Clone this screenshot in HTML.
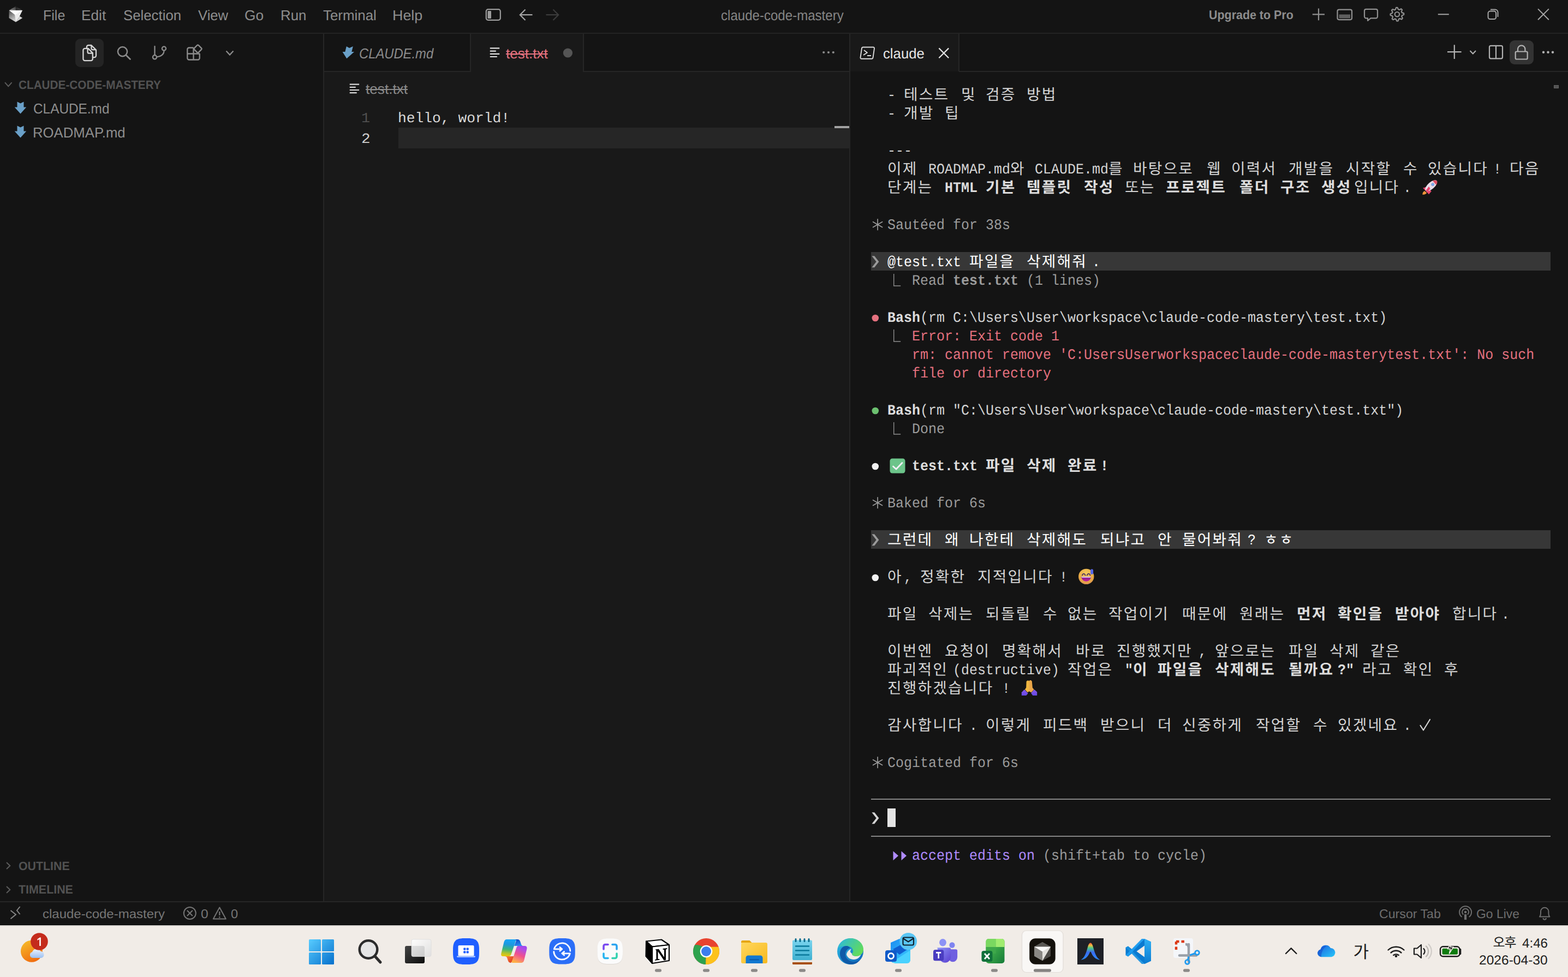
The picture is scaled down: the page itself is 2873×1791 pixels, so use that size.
<!DOCTYPE html>
<html lang="ko"><head><meta charset="utf-8"><title>claude-code-mastery - Cursor</title>
<style>
html,body{margin:0;padding:0;background:#141414}
body{width:2873px;height:1791px;overflow:hidden;position:relative;font-family:"Liberation Sans",sans-serif;text-rendering:geometricPrecision;-webkit-font-smoothing:antialiased}
.bx{position:absolute}
.t{position:absolute;white-space:pre;transform-origin:0 0}
#ov{position:absolute;left:0;top:0}
#term,#term2{position:absolute;left:1596px;top:156px;width:1245px;height:1496px;font-family:"Liberation Mono",monospace;font-size:25px}
.row{position:absolute;left:0;width:1245px;height:34px;line-height:40px;white-space:pre}
.c{position:absolute;top:0;white-space:pre;transform:scaleY(1.07);transform-origin:0 26.6px}
.bd{font-weight:bold}
.hk{position:absolute;top:0;height:34px;line-height:34px;overflow:hidden;color:transparent;opacity:0;font-size:12px;white-space:nowrap}
.hl{position:absolute;left:0;width:1245px;height:34px;background:#373737}
#tb{position:absolute;left:0;top:1695px;width:2873px;height:96px;background:#f1ece7;border-top:1px solid #050505;box-sizing:border-box;box-shadow:inset 0 1px 0 #c4c1be,inset 0 2px 0 #dfdbd7}
.kt{font-family:"Liberation Mono","Noto Sans CJK KR",monospace;font-size:27.8px;letter-spacing:2.2px;fill:#d4d4d4;white-space:pre}
.kb{font-weight:bold;fill:#dddddd}
.kw{fill:#ffffff}
</style></head><body>
<div class="bx" style="left:594px;top:131px;width:962px;height:1521px;background:#191919"></div>
<div class="bx" style="left:863px;top:62px;width:205px;height:70px;background:#191919"></div>
<div class="bx" style="left:1558px;top:62px;width:198px;height:69px;background:#191919"></div>
<div class="bx" style="left:0;top:60px;width:2873px;height:2px;background:#232323"></div>
<div class="bx" style="left:592px;top:62px;width:2px;height:1591px;background:#262626"></div>
<div class="bx" style="left:1556px;top:62px;width:2px;height:1591px;background:#262626"></div>
<div class="bx" style="left:594px;top:130px;width:269px;height:2px;background:#262626"></div>
<div class="bx" style="left:1068px;top:130px;width:488px;height:2px;background:#262626"></div>
<div class="bx" style="left:1757px;top:130px;width:1116px;height:2px;background:#262626"></div>
<div class="bx" style="left:861px;top:62px;width:2px;height:69px;background:#262626"></div>
<div class="bx" style="left:1068px;top:62px;width:2px;height:69px;background:#262626"></div>
<div class="bx" style="left:1756px;top:62px;width:2px;height:69px;background:#262626"></div>
<div class="bx" style="left:138px;top:71px;width:52px;height:52px;border-radius:9px;background:#242424"></div>
<div class="bx" style="left:2766px;top:74px;width:44px;height:44px;border-radius:9px;background:#333"></div>
<div class="bx" style="left:730px;top:234px;width:826px;height:38px;background:#262626"></div>
<div class="bx" style="left:1529px;top:231px;width:27px;height:4px;background:#a2a2a2"></div>
<div class="bx" style="left:2847px;top:156px;width:9px;height:6px;background:#525252;box-shadow:inset 0 0 0 1px #646464"></div>
<div class="bx" style="left:0;top:1652px;width:2873px;height:2px;background:#262626"></div>
<div id="tb"></div>
<div id="term"><div class="hl" style="top:306px"></div><div class="hl" style="top:816px"></div></div>
<svg id="ov" width="2873" height="1791" viewBox="0 0 2873 1791">
<defs><linearGradient id="gwin" gradientUnits="userSpaceOnUse" x1="566" y1="1722" x2="612" y2="1768"><stop offset="0" stop-color="#58ccff"/><stop offset="1" stop-color="#0670cc"/></linearGradient><linearGradient id="gsun" x1="0.2" y1="0" x2="0.7" y2="1"><stop offset="0" stop-color="#f6bb2a"/><stop offset="1" stop-color="#f0690e"/></linearGradient><linearGradient id="gcloud" x1="0" y1="0" x2="0" y2="1"><stop offset="0" stop-color="#eef4ff"/><stop offset="1" stop-color="#9cc0f0"/></linearGradient><linearGradient id="gtv" x1="0" y1="0" x2="1" y2="1"><stop offset="0" stop-color="#444"/><stop offset="1" stop-color="#0c0c0c"/></linearGradient><linearGradient id="gtv2" x1="0" y1="0" x2="1" y2="1"><stop offset="0" stop-color="#ffffff"/><stop offset="1" stop-color="#dedede"/></linearGradient><linearGradient id="gcp1" x1="0.1" y1="0" x2="0" y2="1"><stop offset="0" stop-color="#18a4f4"/><stop offset="0.25" stop-color="#1c98e0"/><stop offset="0.55" stop-color="#3cb47a"/><stop offset="0.8" stop-color="#b8c42a"/><stop offset="1" stop-color="#f6c806"/></linearGradient><linearGradient id="gcpf1" x1="0" y1="0" x2="0.4" y2="1"><stop offset="0" stop-color="#0a44c4"/><stop offset="1" stop-color="#2a8cf0"/></linearGradient><linearGradient id="gcpf2" x1="0" y1="0" x2="1" y2="0.6"><stop offset="0" stop-color="#ff8a40"/><stop offset="1" stop-color="#dc3a1e"/></linearGradient><linearGradient id="gcp2" x1="0.75" y1="0" x2="0.35" y2="1"><stop offset="0" stop-color="#a048f0"/><stop offset="0.2" stop-color="#b44ee0"/><stop offset="0.55" stop-color="#f0508e"/><stop offset="0.8" stop-color="#f88470"/><stop offset="1" stop-color="#ffb044"/></linearGradient><linearGradient id="gedge" x1="0" y1="0" x2="1" y2="1"><stop offset="0" stop-color="#2fc0e8"/><stop offset="1" stop-color="#0c5fb5"/></linearGradient><linearGradient id="gedge2" x1="0" y1="0" x2="1" y2="0.6"><stop offset="0" stop-color="#2ab8e0"/><stop offset="1" stop-color="#62dc5a"/></linearGradient><linearGradient id="gfold" x1="0" y1="0" x2="1" y2="1"><stop offset="0" stop-color="#ffd75e"/><stop offset="1" stop-color="#f7b91e"/></linearGradient><linearGradient id="gnote" x1="0" y1="0" x2="0" y2="1"><stop offset="0" stop-color="#7ad4ee"/><stop offset="1" stop-color="#3fb0d0"/></linearGradient><linearGradient id="gout" x1="0" y1="0" x2="1" y2="1"><stop offset="0" stop-color="#1a8af0"/><stop offset="1" stop-color="#3fd0ff"/></linearGradient><linearGradient id="gteam" x1="0" y1="0" x2="1" y2="1"><stop offset="0" stop-color="#8f96f8"/><stop offset="1" stop-color="#5a3fd0"/></linearGradient><linearGradient id="gxl" x1="0" y1="0" x2="1" y2="1"><stop offset="0" stop-color="#5ccc55"/><stop offset="1" stop-color="#147a38"/></linearGradient><linearGradient id="gA" x1="0" y1="1" x2="0" y2="0"><stop offset="0" stop-color="#2a8cff"/><stop offset="0.45" stop-color="#3a6cf0"/><stop offset="0.7" stop-color="#4fc88a"/><stop offset="0.85" stop-color="#f0c040"/><stop offset="1" stop-color="#ff5a3c"/></linearGradient><linearGradient id="gvs" x1="0" y1="0" x2="0" y2="1"><stop offset="0" stop-color="#2eb0f5"/><stop offset="1" stop-color="#0a7ad0"/></linearGradient><linearGradient id="god" x1="0" y1="0" x2="1" y2="1"><stop offset="0" stop-color="#1a5fe0"/><stop offset="1" stop-color="#28c8f8"/></linearGradient><linearGradient id="gcube" x1="0" y1="0" x2="1" y2="0"><stop offset="0" stop-color="#7a7a7a"/><stop offset="1" stop-color="#dcdcdc"/></linearGradient><linearGradient id="glogoA" x1="0" y1="1" x2="1" y2="0"><stop offset="0" stop-color="#9a9a9a"/><stop offset="1" stop-color="#2c2c2c"/></linearGradient><linearGradient id="glogoB" x1="0" y1="0" x2="1" y2="1"><stop offset="0" stop-color="#161616"/><stop offset="1" stop-color="#4a4a4a"/></linearGradient><linearGradient id="glogoC" x1="0" y1="0" x2="0.300" y2="1"><stop offset="0" stop-color="#484848"/><stop offset="1" stop-color="#cfcfcf"/></linearGradient><radialGradient id="gface" cx="0.5" cy="0.3" r="0.75"><stop offset="0" stop-color="#f4cc5c"/><stop offset="0.7" stop-color="#e8a844"/><stop offset="1" stop-color="#d88c58"/></radialGradient><linearGradient id="gmouth" x1="0" y1="0" x2="0" y2="1"><stop offset="0" stop-color="#7a1e8c"/><stop offset="1" stop-color="#c8209a"/></linearGradient><linearGradient id="gsleeve" x1="0.5" y1="0" x2="0.5" y2="1"><stop offset="0" stop-color="#8a58ec"/><stop offset="1" stop-color="#6448e0"/></linearGradient></defs>
<path d="M28.900 11.500L16.500 19H28.900z" fill="url(#glogoA)"/><path d="M28.900 11.500L41.200 19H28.900z" fill="url(#glogoB)"/><path d="M16.500 19L27.200 27.200L28.900 40.400L16.500 33z" fill="url(#glogoC)"/><path d="M16.700 19H41.200L36 29.700L28.900 40.400L27.200 27.200z" fill="#fdfdfd"/><path d="M27.200 27.200L41.200 19L28.900 40.400z" fill="#ececec"/><path d="M41.200 19V33L36 29.700z" fill="#1b1b1b"/><path d="M36 29.700L41.200 33L28.900 40.400z" fill="#d4d4d4"/>
<rect x="890.800" y="17.200" width="26" height="19.600" rx="3.500" fill="none" stroke="#9c9c9c" stroke-width="2.200"/>
<rect x="893.500" y="20" width="6.500" height="14" rx="1" fill="#9c9c9c"/>
<path d="M975.500 27.200H953M962.500 17.500L952.800 27.200L962.500 37" fill="none" stroke="#a4a4a4" stroke-width="2.200"/>
<path d="M1000.500 27.200H1023M1013.500 17.500L1023.200 27.200L1013.500 37" fill="none" stroke="#3c3c3c" stroke-width="2.200"/>
<path d="M2404.800 26.400H2427M2416 15.500V37.300" stroke="#909090" stroke-width="2.200"/>
<rect x="2450.500" y="17.600" width="26.500" height="18.500" rx="3" fill="none" stroke="#909090" stroke-width="2.200"/>
<rect x="2453.500" y="26.500" width="20.500" height="7" fill="#5e5e5e"/>
<path d="M2503 16.800h18a3 3 0 0 1 3 3v10.500a3 3 0 0 1-3 3h-9.500l-5.500 4.500v-4.500h-3a3 3 0 0 1-3-3V19.800a3 3 0 0 1 3-3z" fill="none" stroke="#909090" stroke-width="2.200" stroke-linejoin="round"/>
<path d="M2558.1 13.9L2560.5 13.8L2562.1 17.3L2563.8 17.9L2567.3 16.2L2569.1 17.9L2567.8 21.5L2568.6 23.1L2572.2 24.4L2572.3 26.8L2568.8 28.4L2568.2 30.1L2569.9 33.6L2568.2 35.4L2564.6 34.1L2563.0 34.9L2561.7 38.5L2559.3 38.6L2557.7 35.1L2556.0 34.5L2552.5 36.2L2550.7 34.5L2552.0 30.9L2551.2 29.3L2547.6 28.0L2547.5 25.6L2551.0 24.0L2551.6 22.3L2549.9 18.8L2551.6 17.0L2555.2 18.3L2556.8 17.5z" fill="none" stroke="#909090" stroke-width="2.200" stroke-linejoin="round"/>
<circle cx="2559.9" cy="26.2" r="4.200" fill="none" stroke="#909090" stroke-width="2.200"/>
<path d="M2634.800 26.300H2654.800" stroke="#a6a6a6" stroke-width="2"/>
<rect x="2726.600" y="20.600" width="14.500" height="14.500" rx="3.500" fill="none" stroke="#a6a6a6" stroke-width="2"/>
<path d="M2731 17.400h8.500a5 5 0 0 1 5 5v8.500" fill="none" stroke="#a6a6a6" stroke-width="2"/>
<path d="M2818 16.400L2837.800 36.200M2837.800 16.400L2818 36.200" stroke="#a6a6a6" stroke-width="2"/>
<path d="M158.900 88v-2a3 3 0 0 1 3-3h5.500l8.600 8.600v10.500a3 3 0 0 1-3 3h-2.800M167.400 83.200v5.400a2.500 2.500 0 0 0 2.500 2.500h5.900" fill="none" stroke="#d6d6d6" stroke-width="2.300" stroke-linejoin="round"/>
<path d="M155.400 88.900h6.200l8.200 8.200v11a3 3 0 0 1-3 3h-11.400a3 3 0 0 1-3-3v-16.200a3 3 0 0 1 3-3zM160.600 89v6.200a2.500 2.500 0 0 0 2.500 2.500h6.500" fill="none" stroke="#d6d6d6" stroke-width="2.300" stroke-linejoin="round"/>
<circle cx="224.500" cy="94.600" r="8.600" fill="none" stroke="#8c8c8c" stroke-width="2.500"/>
<path d="M230.800 101L238.500 108.500" stroke="#8c8c8c" stroke-width="2.700" stroke-linecap="round"/>
<circle cx="283.500" cy="104.800" r="3.600" fill="none" stroke="#8c8c8c" stroke-width="2.300"/>
<circle cx="300.500" cy="89" r="3.600" fill="none" stroke="#8c8c8c" stroke-width="2.300"/>
<path d="M283.500 85V101M300.500 92.800c0 7-5.500 10.500-13.300 11.600" fill="none" stroke="#8c8c8c" stroke-width="2.300" stroke-linecap="round"/>
<path d="M354.500 87.500V109.500M343.300 98.500H365.700M346.300 87.500h8.200M343.300 90.500a3 3 0 0 1 3-3M343.300 90.500v16a3 3 0 0 0 3 3h16.400a3 3 0 0 0 3-3v-8.500" fill="none" stroke="#8c8c8c" stroke-width="2.300" stroke-linejoin="round"/>
<rect x="357" y="84" width="11" height="11" rx="2" fill="none" stroke="#8c8c8c" stroke-width="2.300" transform="rotate(45 362.500 89.500)"/>
<path d="M414.500 93.500L421 100.500L427.500 93.500" fill="none" stroke="#8c8c8c" stroke-width="2.300"/>
<path d="M9 151.200L15.300 158.200L21.600 151.200" fill="none" stroke="#5c5c5c" stroke-width="2"/>
<path d="M4.8 0.0L10.8 3.0L16.8 0.0L16.8 10.0L21.5 10.0L10.8 22.2L0.0 10.0L4.8 10.0z" fill="#6aa0c8" transform="translate(26.7 186.4)"/>
<path d="M4.8 0.0L10.8 3.0L16.8 0.0L16.8 10.0L21.5 10.0L10.8 22.2L0.0 10.0L4.8 10.0z" fill="#6aa0c8" transform="translate(26.7 230.4)"/>
<path d="M12 1581L18.300 1587L12 1593" fill="none" stroke="#5c5c5c" stroke-width="2"/>
<path d="M12 1625L18.300 1631L12 1637" fill="none" stroke="#5c5c5c" stroke-width="2"/>
<path d="M4.8 0.0L10.8 3.0L16.8 0.0L16.8 10.0L21.5 10.0L10.8 22.2L0.0 10.0L4.8 10.0z" fill="#6aa0c8" transform="translate(630 85) skewX(-14)"/>
<path d="M897.8 88.4h17.400M897.8 93.6h11M897.8 98.8h17.400M897.8 104h13" stroke="#e0e0e0" stroke-width="2.200" fill="none"/>
<circle cx="1040.400" cy="97" r="8.600" fill="#555"/>
<path d="M640.7 154.6h17.400M640.7 159.8h11M640.7 165h17.400M640.7 170.2h13" stroke="#d8d8d8" stroke-width="2.200" fill="none"/>
<circle cx="1509.2" cy="96" r="2.100" fill="#8c8c8c"/>
<circle cx="1518" cy="96" r="2.100" fill="#8c8c8c"/>
<circle cx="1526.8" cy="96" r="2.100" fill="#8c8c8c"/>
<g transform="translate(1576.500 85.500)" fill="none" stroke="#dcdcdc" stroke-width="1.900" stroke-linejoin="round"><path d="M5 1h18.500a2 2 0 0 1 2 2.300l-2.500 17a2.500 2.500 0 0 1-2.500 2H2a2 2 0 0 1-2-2.300l2.500-17A2.500 2.500 0 0 1 5 1z"/><path d="M6.500 6.500L12.500 11L5.500 15.500M12.500 16.500h7"/></g>
<path d="M1720.400 88.400L1738.200 106.200M1738.200 88.400L1720.400 106.200" stroke="#e2e2e2" stroke-width="2.200"/>
<path d="M2652 95.200H2677.600M2664.800 82.300V108" stroke="#b2b2b2" stroke-width="2.200"/>
<path d="M2693.500 93L2698.800 98.500L2704 93" fill="none" stroke="#b2b2b2" stroke-width="2"/>
<rect x="2729" y="83.800" width="24" height="23.500" rx="2.500" fill="none" stroke="#b2b2b2" stroke-width="2.200"/>
<path d="M2741 83.800V107.300" stroke="#b2b2b2" stroke-width="2.200"/>
<rect x="2776.700" y="94.500" width="22" height="14" rx="2" fill="none" stroke="#b2b2b2" stroke-width="2.200"/>
<path d="M2781 94.500v-4.500a6.700 6.700 0 0 1 13.400 0v4.500" fill="none" stroke="#b2b2b2" stroke-width="2.200"/>
<circle cx="2828" cy="95.700" r="2.200" fill="#b2b2b2"/>
<circle cx="2836.500" cy="95.700" r="2.200" fill="#b2b2b2"/>
<circle cx="2845" cy="95.700" r="2.200" fill="#b2b2b2"/>
<path d="M19.500 1669L29 1676.500L19.500 1684.300M36.600 1662L31 1669L36.600 1676" fill="none" stroke="#868686" stroke-width="2"/>
<circle cx="347.800" cy="1674" r="11" fill="none" stroke="#747474" stroke-width="2"/>
<path d="M342.800 1669L352.800 1679M352.800 1669L342.800 1679" stroke="#747474" stroke-width="2"/>
<path d="M402.300 1663.500L413.800 1684.500H390.800z" fill="none" stroke="#747474" stroke-width="2" stroke-linejoin="round"/>
<path d="M402.300 1671V1678M402.300 1680.200V1682.400" stroke="#747474" stroke-width="2.200"/>
<path d="M2678.500 1681a11 11 0 1 1 13.200 0" fill="none" stroke="#6e6e6e" stroke-width="2"/>
<path d="M2681.300 1676.500a6 6 0 1 1 7.600 0" fill="none" stroke="#6e6e6e" stroke-width="2"/>
<circle cx="2685.100" cy="1672" r="2.300" fill="#6e6e6e"/>
<path d="M2683 1676h4.200v10h-4.200z" fill="#6e6e6e"/>
<path d="M2821 1680.500c2.500-2.500 2-6 2-9.500a7.200 7.200 0 0 1 14.400 0c0 3.500-0.500 7 2 9.500z" fill="none" stroke="#6e6e6e" stroke-width="2" stroke-linejoin="round"/>
<path d="M2827.500 1683a2.700 2.700 0 0 0 5.400 0" fill="none" stroke="#6e6e6e" stroke-width="2"/>
<circle cx="58" cy="1743.800" r="20" fill="url(#gsun)"/>
<path d="M60 1756a5.500 5.500 0 0 1-1-10.800a8.500 8.500 0 0 1 15.500-1.500a6.300 6.300 0 0 1 1.500 12.300z" fill="url(#gcloud)"/>
<circle cx="72" cy="1726" r="15.800" fill="#c42b1c"/>
<path d="M68.500 1721.500l4.500-3h1.800v15.500h-2.600v-12.300l-3.700 2.200z" fill="#fff"/>
<rect x="566" y="1722" width="22" height="22" rx="1.500" fill="url(#gwin)"/>
<rect x="590" y="1722" width="22" height="22" rx="1.500" fill="url(#gwin)"/>
<rect x="566" y="1746" width="22" height="22" rx="1.500" fill="url(#gwin)"/>
<rect x="590" y="1746" width="22" height="22" rx="1.500" fill="url(#gwin)"/>
<circle cx="675" cy="1740.500" r="16.300" fill="#e6e6e6" stroke="#2c2c2c" stroke-width="4.500"/>
<path d="M687 1753L697 1764" stroke="#2c2c2c" stroke-width="5" stroke-linecap="round"/>
<rect x="742" y="1734" width="36" height="32" rx="3" fill="url(#gtv)"/>
<rect x="754" y="1722" width="36" height="31.500" rx="3" fill="url(#gtv2)" fill-opacity="0.880" stroke="#dcdcdc" stroke-width="0.800"/>
<path d="M878.0 1744.0L877.9 1750.4L877.6 1753.7L877.2 1756.3L876.5 1758.5L875.7 1760.4L874.7 1762.0L873.5 1763.5L872.0 1764.7L870.4 1765.7L868.5 1766.5L866.3 1767.2L863.7 1767.6L860.4 1767.9L854.0 1768.0L847.6 1767.9L844.3 1767.6L841.7 1767.2L839.5 1766.5L837.6 1765.7L836.0 1764.7L834.5 1763.5L833.3 1762.0L832.3 1760.4L831.5 1758.5L830.8 1756.3L830.4 1753.7L830.1 1750.4L830.0 1744.0L830.1 1737.6L830.4 1734.3L830.8 1731.7L831.5 1729.5L832.3 1727.6L833.3 1726.0L834.5 1724.5L836.0 1723.3L837.6 1722.3L839.5 1721.5L841.7 1720.8L844.3 1720.4L847.6 1720.1L854.0 1720.0L860.4 1720.1L863.7 1720.4L866.3 1720.8L868.5 1721.5L870.4 1722.3L872.0 1723.3L873.5 1724.5L874.7 1726.0L875.7 1727.6L876.5 1729.5L877.2 1731.7L877.6 1734.3L877.9 1737.6z" fill="#1f5fff"/>
<rect x="839.5" y="1733" width="29" height="19.500" rx="2" fill="#fff"/>
<rect x="837" y="1752.300" width="34" height="2.600" rx="1.300" fill="#a8c4ff"/>
<rect x="849.2" y="1737.5" width="4.200" height="4.200" rx="1.200" fill="#1f5fff"/>
<rect x="854.6" y="1737.5" width="4.200" height="4.200" rx="1.200" fill="#1f5fff"/>
<rect x="849.2" y="1743.2" width="4.200" height="4.200" rx="1.200" fill="#1f5fff"/>
<rect x="854.6" y="1743.2" width="4.200" height="4.200" rx="1.200" fill="#1f5fff"/>
<g transform="translate(900 1705) scale(0.07008)"><path d="M620 243H690Q740 243 760 300L785 375Q800 415 845 415H600L655 275z" fill="url(#gcpf1)"/><path d="M350 685H610L540 823Q527 855 505 855Q460 855 440 800L415 725Q400 685 350 685z" fill="url(#gcpf2)"/><path d="M405 243H630Q658 243 645 275L520 640Q505 685 455 685H310Q245 685 262 610L335 310Q352 243 405 243z" fill="url(#gcp1)"/><path d="M700 415H870Q950 415 932 495L860 790Q845 855 790 855H555Q527 855 540 823L660 460Q675 415 700 415z" fill="url(#gcp2)"/></g>
<path d="M1053.8 1743.8L1053.7 1750.1L1053.4 1753.3L1053.0 1755.9L1052.3 1758.1L1051.5 1760.0L1050.5 1761.6L1049.3 1763.0L1047.9 1764.2L1046.3 1765.2L1044.4 1766.0L1042.2 1766.7L1039.6 1767.1L1036.4 1767.4L1030.1 1767.5L1023.7 1767.4L1020.5 1767.1L1017.9 1766.7L1015.7 1766.0L1013.8 1765.2L1012.2 1764.2L1010.8 1763.0L1009.6 1761.6L1008.6 1760.0L1007.8 1758.1L1007.1 1755.9L1006.7 1753.3L1006.4 1750.1L1006.3 1743.8L1006.4 1737.4L1006.7 1734.2L1007.1 1731.6L1007.8 1729.4L1008.6 1727.5L1009.6 1725.9L1010.8 1724.5L1012.2 1723.3L1013.8 1722.3L1015.7 1721.5L1017.9 1720.8L1020.5 1720.4L1023.7 1720.1L1030.0 1720.0L1036.4 1720.1L1039.6 1720.4L1042.2 1720.8L1044.4 1721.5L1046.3 1722.3L1047.9 1723.3L1049.3 1724.5L1050.5 1725.9L1051.5 1727.5L1052.3 1729.4L1053.0 1731.6L1053.4 1734.2L1053.7 1737.4z" fill="#2b6ef7"/>
<g transform="translate(1006.3 1720)" fill="none" stroke="#fff" stroke-width="2.800" stroke-linecap="round" stroke-linejoin="round"><path d="M38.550 23.200A15.070 15.070 0 0 0 9 19.800H23M19.600 16.500L23.500 19.800L19.600 23.200"/><path d="M8.450 24.600A15.070 15.070 0 0 0 38.050 27.800H24M27.300 24.500L23.500 27.800L27.300 31"/></g>
<path d="M1141.0 1744.8L1140.9 1750.9L1140.6 1754.1L1140.2 1756.6L1139.6 1758.8L1138.8 1760.6L1137.8 1762.2L1136.6 1763.6L1135.2 1764.8L1133.6 1765.8L1131.8 1766.6L1129.6 1767.2L1127.1 1767.6L1123.9 1767.9L1117.8 1768.0L1111.6 1767.9L1108.4 1767.6L1105.9 1767.2L1103.7 1766.6L1101.9 1765.8L1100.3 1764.8L1098.9 1763.6L1097.7 1762.2L1096.7 1760.6L1095.9 1758.8L1095.3 1756.6L1094.9 1754.1L1094.6 1750.9L1094.5 1744.8L1094.6 1738.6L1094.9 1735.4L1095.3 1732.9L1095.9 1730.7L1096.7 1728.9L1097.7 1727.3L1098.9 1725.9L1100.3 1724.7L1101.9 1723.7L1103.7 1722.9L1105.9 1722.3L1108.4 1721.9L1111.6 1721.6L1117.7 1721.5L1123.9 1721.6L1127.1 1721.9L1129.6 1722.3L1131.8 1722.9L1133.6 1723.7L1135.2 1724.7L1136.6 1725.9L1137.8 1727.3L1138.8 1728.9L1139.6 1730.7L1140.2 1732.9L1140.6 1735.4L1140.9 1738.6z" fill="#dcd8d4"/>
<path d="M1141.0 1743.8L1140.9 1749.9L1140.6 1753.1L1140.2 1755.6L1139.6 1757.8L1138.8 1759.6L1137.8 1761.2L1136.6 1762.6L1135.2 1763.8L1133.6 1764.8L1131.8 1765.6L1129.6 1766.2L1127.1 1766.6L1123.9 1766.9L1117.8 1767.0L1111.6 1766.9L1108.4 1766.6L1105.9 1766.2L1103.7 1765.6L1101.9 1764.8L1100.3 1763.8L1098.9 1762.6L1097.7 1761.2L1096.7 1759.6L1095.9 1757.8L1095.3 1755.6L1094.9 1753.1L1094.6 1749.9L1094.5 1743.8L1094.6 1737.6L1094.9 1734.4L1095.3 1731.9L1095.9 1729.7L1096.7 1727.9L1097.7 1726.3L1098.9 1724.9L1100.3 1723.7L1101.9 1722.7L1103.7 1721.9L1105.9 1721.3L1108.4 1720.9L1111.6 1720.6L1117.7 1720.5L1123.9 1720.6L1127.1 1720.9L1129.6 1721.3L1131.8 1721.9L1133.6 1722.7L1135.2 1723.7L1136.6 1724.9L1137.8 1726.3L1138.8 1727.9L1139.6 1729.7L1140.2 1731.9L1140.6 1734.4L1140.9 1737.6z" fill="#fbfbfb"/>
<g transform="translate(1094 1720)" fill="none" stroke-width="3.600" stroke-linecap="round" stroke-linejoin="round"><path d="M12 20v-5.500a3 3 0 0 1 3-3h5" stroke="#7848f0"/><path d="M28 11.500h5a3 3 0 0 1 3 3V20" stroke="#2aa4f0"/><path d="M12 28v5.500a3 3 0 0 0 3 3h5" stroke="#28b4f0"/><path d="M28 36.500h5a3 3 0 0 0 3-3V28" stroke="#34d2b0"/></g>
<g transform="translate(1182 1720)"><path d="M2 5.500L30 2.500l14 9.500v29l-33 5L1 33z" fill="#fff" stroke="#fff" stroke-width="3" stroke-linejoin="round"/><path d="M2 5.500L30 2.500l14 9.500-31 3.500z" fill="#fff" stroke="#000" stroke-width="2.200" stroke-linejoin="round"/><path d="M2 5.500l11 10V46L1.500 33z" fill="#000" stroke="#000" stroke-width="2.200" stroke-linejoin="round"/><path d="M13 15.500l31-3.500v29l-31 5z" fill="#fff" stroke="#000" stroke-width="2.200" stroke-linejoin="round"/><path d="M18.500 20.500l6.500-0.800 10 15v-13.500l-2.500-0.600v-1.500l8-1v1.500l-2.500 0.900v19.500l-3.500 0.500-11-16.500v14l3 0.200v1.500l-8.500 1v-1.500l2.500-0.800V22.300z" fill="#000"/></g>
<circle cx="1294" cy="1744" r="24" fill="#e8432f"/>
<path d="M1294 1744L1273.2 1732A24 24 0 0 1 1295.5 1768L1306 1750z" fill="#2ea24d"/>
<path d="M1273.2 1732A24 24 0 0 1 1273.2 1732L1294 1744A24 24 0 0 0 1273.2 1732z" fill="#2ea24d"/>
<path d="M1294 1744L1273.2 1732A24 24 0 0 0 1293 1768z" fill="#2ea24d"/>
<path d="M1294 1744L1293 1768A24 24 0 0 0 1316.5 1735.7H1294z" fill="#fcc21b"/>
<circle cx="1294" cy="1744" r="11.300" fill="#fff"/>
<circle cx="1294" cy="1744" r="9" fill="#3b7ded"/>
<g transform="translate(1358 1720)"><path d="M0 6.500a2.500 2.500 0 0 1 2.500-2.500h13l4.500 4.500H0z" fill="#e6a612"/><rect x="0" y="8" width="48" height="38" rx="3" fill="url(#gfold)"/><path d="M8.500 46V36a4.500 4.500 0 0 1 4.500-4.500h22a4.500 4.500 0 0 1 4.500 4.500v10z" fill="#1278d0"/><rect x="15" y="38.200" width="18" height="2" rx="1" fill="#0a5aa8"/></g>
<g transform="translate(1446 1720)"><rect x="6" y="40" width="36" height="8" rx="1.500" fill="#a84f0c"/><rect x="6" y="38" width="36" height="6" fill="#e8e4e0"/><rect x="6" y="3.500" width="36" height="36.500" rx="2" fill="url(#gnote)"/><path d="M12 14.500h24M12 22.500h24M12 30.500h24" stroke="#08789a" stroke-width="2.600" stroke-linecap="round"/><path d="M12 1.500v4M20 1.500v4M28 1.500v4M36 1.500v4" stroke="#08688a" stroke-width="3" stroke-linecap="round"/></g>
<g transform="translate(1534 1720)"><circle cx="24" cy="24" r="24" fill="url(#gedge)"/><path d="M2 17C6 5 16 0 25 0c13 0 23 10 23 20 0 8-6 13-13 13-5 0-8-2-8-4 0-1.500 2-2 2-5.500C29 18 24 14 17 14 10 14 4 16 2 17z" fill="url(#gedge2)"/><path d="M17 14c-7 0-12 6-12 14 0 11 9 20 21 20 6 0 12-3 15-8-3 2-7 3-10 3-9 0-16-6-16-14 0-6 4-10 9-11-2-2-4-4-7-4z" fill="#0f5aa8"/><path d="M27 29c0 2 3 4 8 4 3 0 6-1 8.500-3-2 5-7 9-13 9-7 0-12-4-13.500-9 1-6 5-9.500 9-10.500-1 1-2 3-2 5 0 2 3 2.500 3 4.500z" fill="#f0ebe6"/></g>
<g transform="translate(1622 1720)"><path d="M10 8l16-7 20 10v28a6 6 0 0 1-6 6H16a6 6 0 0 1-6-6z" fill="url(#gout)"/><path d="M14 20l18-10 14 7-20 13z" fill="#0f5fd0"/><path d="M12 44l34-22v18a6 6 0 0 1-6 6H18z" fill="#49d2ff"/><rect x="0" y="22" width="21" height="21" rx="4" fill="#0f5ac8"/><circle cx="10.500" cy="32.500" r="5" fill="none" stroke="#fff" stroke-width="2.800"/></g>
<circle cx="1664.200" cy="1725.700" r="15.800" fill="#5ac6f4"/>
<rect x="1654.500" y="1718.500" width="19.500" height="14" rx="2.500" fill="none" stroke="#10222e" stroke-width="2.200"/>
<path d="M1655 1720.500l9.200 6 9.200-6" fill="none" stroke="#10222e" stroke-width="2.200"/>
<g transform="translate(1710 1720) scale(0.920 0.960)"><circle cx="19" cy="8" r="7" fill="#8c92f5"/><circle cx="37.500" cy="13" r="5.500" fill="#7f84f0"/><path d="M28 21h17a3 3 0 0 1 3 3v12a9 9 0 0 1-18 0z" fill="#6f5fe0"/><path d="M8 18h24a3 3 0 0 1 3 3v14a11.500 11.500 0 0 1-23 0z" fill="url(#gteam)"/><rect x="0" y="22" width="21" height="21" rx="4" fill="#4a3cc0"/><path d="M5.500 27.500h10M10.500 27.500v11" stroke="#fff" stroke-width="2.800"/></g>
<g transform="translate(1794.5 1720)"><path d="M12 6a5 5 0 0 1 5-5h24a5 5 0 0 1 5 5v35a5 5 0 0 1-5 5H17a5 5 0 0 1-5-5z" fill="url(#gxl)"/><path d="M12 6a5 5 0 0 1 5-5h13v15H12z" fill="#7ad860"/><path d="M30 1h11a5 5 0 0 1 5 5v10H30z" fill="#a0ec70"/><path d="M12 16h18v12H12z" fill="#3ea84a"/><rect x="4" y="23" width="20" height="20" rx="4" fill="#10703a"/><path d="M9.500 28l9 10M18.500 28l-9 10" stroke="#fff" stroke-width="2.800"/></g>
<rect x="1872.500" y="1706" width="75.500" height="76.500" rx="8" fill="#f9f7f5" stroke="#e2ddd8" stroke-width="1.200"/>
<rect x="1886.2" y="1720.2" width="47.500" height="47.500" rx="11" fill="#14110c"/>
<g transform="translate(1886 1720)"><path d="M24 7L39 15.500V32.500L24 41L9 32.500V15.500z" fill="#6a6864"/><path d="M24 7L39 15.500L24 19.500L9 15.500z" fill="#5a5854"/><path d="M9 15.500L24 19.500V41L9 32.500z" fill="#807e7a"/><path d="M9 15.500L39 15.500L24 41z" fill="#fbfbfa"/><path d="M9 15.500L24 24.500L24 41L9 32.500z" fill="#8a8884"/><path d="M39 15.500L24 24.500V41z" fill="#d8d6d2"/><path d="M39 15.500V32.500L24 41z" fill="#4e4c48"/><path d="M39 15.500L24 41V24.500z" fill="#e4e2de"/></g>
<rect x="1974" y="1720" width="48" height="48" fill="#1e2026"/>
<path d="M1980.5 1759.5c6-3 9.500-12 12-21.500 2-7.500 3.500-9.500 5.500-9.500s3.500 2 5.500 9.500c2.500 9.500 6 18.500 12 21.500-9-0.500-13.500-7-16-13-0.500-1.300-1-2-1.500-2s-1 0.700-1.500 2c-2.500 6-7 12.500-16 13z" fill="url(#gA)"/>
<g transform="translate(2062 1720)"><path d="M35 1l12 5.500v35L35 47 13 27l-8 6.500-4.500-2.500v-14l4.500-2.500 8 6.500z" fill="#0a7ad0"/><path d="M35 1l12 5.500v35L35 47z" fill="url(#gvs)"/><path d="M35 13.500L20.500 24 35 34.500z" fill="#f0ebe6"/><path d="M0.500 17l4.500-2.500L35 47l-5 0z" fill="#1590e0" opacity="0.900"/><path d="M0.500 31l4.500 2.500L35 1l-5 0z" fill="#1a9cf0" opacity="0.950"/></g>
<g transform="translate(2150 1720)"><rect x="0" y="0" width="36" height="36" rx="4" fill="#f4f6fa"/><path d="M5 6h5.500M14.500 6h5.500M5 6v5.500M5 15.500v5.500M5 25v0M24 6h0" stroke="#dd3a14" stroke-width="4.500"/><path d="M5 6h6M15 6h6M5 12v0" stroke="#dd3a14" stroke-width="0"/><path d="M22 6v4" stroke="#dd3a14" stroke-width="0"/><path d="M11 31.500h31" stroke="#9aa0a8" stroke-width="4.500" stroke-linecap="round"/><path d="M28 11v32" stroke="#9aa0a8" stroke-width="4.500" stroke-linecap="round"/><path d="M22 11q6 0 6 6" fill="none" stroke="#9aa0a8" stroke-width="4.500"/><circle cx="43.500" cy="26.500" r="3.800" fill="none" stroke="#1e9af0" stroke-width="2.800"/><circle cx="25.500" cy="43.500" r="3.800" fill="none" stroke="#1e9af0" stroke-width="2.800"/><path d="M30 31l10-3.500M28 33.500l-1.500 6.500" stroke="#1e9af0" stroke-width="3"/></g>
<rect x="1200" y="1776.200" width="12" height="5.600" rx="2.800" fill="#8c8a88"/>
<rect x="1288" y="1776.200" width="12" height="5.600" rx="2.800" fill="#8c8a88"/>
<rect x="1376" y="1776.200" width="12" height="5.600" rx="2.800" fill="#8c8a88"/>
<rect x="1464" y="1776.200" width="12" height="5.600" rx="2.800" fill="#8c8a88"/>
<rect x="1640" y="1776.200" width="12" height="5.600" rx="2.800" fill="#8c8a88"/>
<rect x="1816" y="1776.200" width="12" height="5.600" rx="2.800" fill="#8c8a88"/>
<rect x="2168" y="1776.200" width="12" height="5.600" rx="2.800" fill="#8c8a88"/>
<rect x="1894" y="1776.200" width="32" height="5.600" rx="2.800" fill="#858381"/>
<path d="M2356 1748L2365.700 1738.300L2375.400 1748" fill="none" stroke="#1c1c1c" stroke-width="2.400" stroke-linecap="round" stroke-linejoin="round"/>
<path d="M2421 1754.200a7 7 0 0 1-1.500-13.800a10 10 0 0 1 18.500-2.500a8.200 8.200 0 0 1 1.500 16.300z" fill="url(#god)"/>
<path d="M2421 1754.200a7 7 0 0 1-1.500-13.800a10 10 0 0 1 11-6c-6 3-10 12-9.500 19.800z" fill="#1448c8" opacity="0.550"/>
<text x="2479.500" y="1756.300" font-size="31" fill="#1c1c1c" style="font-family:'Liberation Sans','Noto Sans CJK KR',sans-serif">가</text>
<g fill="none" stroke="#1c1c1c" stroke-width="2.400" stroke-linecap="round"><path d="M2543.500 1741.500a21 21 0 0 1 29 0M2548.500 1746.500a14 14 0 0 1 19 0M2553.300 1751a7.500 7.500 0 0 1 9.400 0"/></g>
<circle cx="2558" cy="1752.800" r="2.300" fill="#1c1c1c"/>
<path d="M2591 1738.500h5.500l7.500-6.500v24l-7.500-6.500h-5.500z" fill="none" stroke="#1c1c1c" stroke-width="2.200" stroke-linejoin="round"/>
<path d="M2608.500 1739a7 7 0 0 1 0 10" fill="none" stroke="#1c1c1c" stroke-width="2.200" stroke-linecap="round"/>
<path d="M2613 1734.500a13 13 0 0 1 0 19" fill="none" stroke="#b8b4b0" stroke-width="2.200" stroke-linecap="round"/>
<path d="M2617.500 1731a18.500 18.500 0 0 1 0 26" fill="none" stroke="#d0ccc8" stroke-width="2.200" stroke-linecap="round"/>
<rect x="2639" y="1735.300" width="35.500" height="18" rx="5" fill="none" stroke="#1c1c1c" stroke-width="2.400"/>
<rect x="2642.500" y="1738.800" width="28.500" height="11" rx="2" fill="#0f7b0f"/>
<path d="M2675.500 1740.500v8" stroke="#1c1c1c" stroke-width="3.600" stroke-linecap="round"/>
<path d="M2659 1728.500l-6.500 11h5l-2 8.500 7.500-12h-5.500z" fill="#1c1c1c" stroke="#f0ebe6" stroke-width="1.600" stroke-linejoin="round"/>
<text x="2735.500" y="1736.300" font-size="24" fill="#1c1c1c" style="font-family:'Liberation Sans','Noto Sans CJK KR',sans-serif;letter-spacing:-1px">오후</text>
<g transform="translate(1596 156)"><text class="kt" x="60" y="27">테스트</text><text class="kt" x="165" y="27">및</text><text class="kt" x="210" y="27">검증</text><text class="kt" x="285" y="27">방법</text><text class="kt" x="60" y="61">개발</text><text class="kt" x="135" y="61">팁</text><text class="kt" x="30" y="163">이제</text><text class="kt" x="255" y="163">와</text><text class="kt" x="435" y="163">를</text><text class="kt" x="480" y="163">바탕으로</text><text class="kt" x="615" y="163">웹</text><text class="kt" x="660" y="163">이력서</text><text class="kt" x="765" y="163">개발을</text><text class="kt" x="870" y="163">시작할</text><text class="kt" x="975" y="163">수</text><text class="kt" x="1020" y="163">있습니다</text><text class="kt" x="1170" y="163">다음</text><text class="kt" x="30" y="197">단계는</text><text class="kt kb" x="210" y="197">기본</text><text class="kt kb" x="285" y="197">템플릿</text><text class="kt kb" x="390" y="197">작성</text><text class="kt" x="465" y="197">또는</text><text class="kt kb" x="540" y="197">프로젝트</text><text class="kt kb" x="675" y="197">폴더</text><text class="kt kb" x="750" y="197">구조</text><text class="kt kb" x="825" y="197">생성</text><text class="kt" x="885" y="197">입니다</text><g transform="translate(1009.5 173.5)"><path d="M0.700 27C1 23.500 2.800 21.500 4.600 20.500L8.700 24C7.500 26.500 4 27.800 0.700 27z" fill="#f0943a"/><path d="M1.500 15L8.500 13.300L17.300 21L12.600 26.800z" fill="#e8446e"/><g transform="translate(16.800 10.900) rotate(-41)"><ellipse rx="13.500" ry="6.200" fill="#e6dce8"/><path d="M8 -4.990A13.500 6.200 0 0 1 8 4.990z" fill="#e04a60"/><path d="M-13.500 0.300L-4 -1.800L-5 3.200L-11.500 4z" fill="#e8446e"/></g><circle cx="19.700" cy="8.700" r="2.700" fill="#6ea8ff" stroke="#a9a2b8" stroke-width="1"/></g><path d="M12.1 245.8L12.1 265.4M3.6 250.7L20.6 260.5M3.6 260.5L20.6 250.7" stroke="#9b9b9b" stroke-width="1.700" stroke-linecap="round"/><path d="M1.4 313.2L6.2 313.2L14.4 323.7L6.2 334.2L1.4 334.2L9.6 323.7z" fill="#9b9b9b"/><text class="kt kw" x="180" y="333">파일을</text><text class="kt kw" x="285" y="333">삭제해줘</text><path d="M41.7 346v22h12.500" fill="none" stroke="#8d8d8d" stroke-width="1.400"/><circle cx="7.8" cy="427" r="6.3" fill="#e4717f"/><path d="M41.7 448v22h12.500" fill="none" stroke="#8d8d8d" stroke-width="1.400"/><circle cx="7.8" cy="597" r="6.3" fill="#6cc070"/><path d="M41.7 618v22h12.500" fill="none" stroke="#8d8d8d" stroke-width="1.400"/><circle cx="7.8" cy="699" r="6.3" fill="#f2f2f2"/><g transform="translate(34.5 683.5)"><rect x="0" y="1" width="28" height="27" rx="4.500" fill="#6cc48a"/><path d="M6 15.500l5.500 5 11-11.500" fill="none" stroke="#f4f0fa" stroke-width="2.800" stroke-linecap="round" stroke-linejoin="round"/></g><text class="kt kb" x="210" y="707">파일</text><text class="kt kb" x="285" y="707">삭제</text><text class="kt kb" x="360" y="707">완료</text><path d="M12.1 755.8L12.1 775.4M3.6 760.7L20.6 770.5M3.6 770.5L20.6 760.7" stroke="#9b9b9b" stroke-width="1.700" stroke-linecap="round"/><path d="M1.4 823.2L6.2 823.2L14.4 833.7L6.2 844.2L1.4 844.2L9.6 833.7z" fill="#9b9b9b"/><text class="kt kw" x="30" y="843">그런데</text><text class="kt kw" x="135" y="843">왜</text><text class="kt kw" x="180" y="843">나한테</text><text class="kt kw" x="285" y="843">삭제해도</text><text class="kt kw" x="420" y="843">되냐고</text><text class="kt kw" x="525" y="843">안</text><text class="kt kw" x="570" y="843">물어봐줘</text><text class="kt kw" x="720" y="843">ㅎㅎ</text><circle cx="7.8" cy="903" r="6.3" fill="#f2f2f2"/><text class="kt" x="30" y="911">아</text><text class="kt" x="90" y="911">정확한</text><text class="kt" x="195" y="911">지적입니다</text><g transform="translate(379.5 887.5)"><circle cx="14.800" cy="13.400" r="14.200" fill="url(#gface)"/><path d="M5.700 13.500H23.700A9 8.900 0 0 1 5.700 13.500z" fill="url(#gmouth)"/><path d="M6 13.500H23.400L22.900 15.400H6.500z" fill="#d8bce8"/><path d="M7.400 11Q10.200 5.200 13.100 11M16.200 11Q19.100 5.200 22.200 11" fill="none" stroke="#4a3260" stroke-width="1.800" stroke-linecap="round"/><rect x="22.600" y="-0.300" width="5" height="9.700" rx="2.500" fill="#5668ea"/></g><text class="kt" x="30" y="979">파일</text><text class="kt" x="105" y="979">삭제는</text><text class="kt" x="210" y="979">되돌릴</text><text class="kt" x="315" y="979">수</text><text class="kt" x="360" y="979">없는</text><text class="kt" x="435" y="979">작업이기</text><text class="kt" x="570" y="979">때문에</text><text class="kt" x="675" y="979">원래는</text><text class="kt kb" x="780" y="979">먼저</text><text class="kt kb" x="855" y="979">확인을</text><text class="kt kb" x="960" y="979">받아야</text><text class="kt" x="1065" y="979">합니다</text><text class="kt" x="30" y="1047">이번엔</text><text class="kt" x="135" y="1047">요청이</text><text class="kt" x="240" y="1047">명확해서</text><text class="kt" x="375" y="1047">바로</text><text class="kt" x="450" y="1047">진행했지만</text><text class="kt" x="630" y="1047">앞으로는</text><text class="kt" x="765" y="1047">파일</text><text class="kt" x="840" y="1047">삭제</text><text class="kt" x="915" y="1047">같은</text><text class="kt" x="30" y="1081">파괴적인</text><text class="kt" x="360" y="1081">작업은</text><text class="kt kb" x="480" y="1081">이</text><text class="kt kb" x="525" y="1081">파일을</text><text class="kt kb" x="630" y="1081">삭제해도</text><text class="kt kb" x="765" y="1081">될까요</text><text class="kt" x="900" y="1081">라고</text><text class="kt" x="975" y="1081">확인</text><text class="kt" x="1050" y="1081">후</text><text class="kt" x="30" y="1115">진행하겠습니다</text><g transform="translate(274.5 1091.5)"><path d="M6.400 16.600L13.200 23.400L9.900 27.500H1.400V21.700z" fill="url(#gsleeve)"/><path d="M24.500 16.600L29.700 20.900V27.500H21.800L18.600 22.900z" fill="url(#gsleeve)"/><path d="M10.100 1.900Q11 -0.300 13.200 -0.100Q14.600 0 15.300 1.100Q16 -0.500 17.300 -0.500Q19.800 -0.300 20.400 2.300L21 13.100L23.900 16.400L19 21.700L15.300 19.700L12.400 21.700L7.400 16.600L9.700 13.100z" fill="#f0b640"/><path d="M15.300 1.100Q16 -0.500 17.300 -0.500Q19.800 -0.300 20.400 2.300L21 13.100L23.900 16.400L19 21.700L15.300 19.700z" fill="#eaa648"/></g><text class="kt" x="30" y="1183">감사합니다</text><text class="kt" x="210" y="1183">이렇게</text><text class="kt" x="315" y="1183">피드백</text><text class="kt" x="420" y="1183">받으니</text><text class="kt" x="525" y="1183">더</text><text class="kt" x="570" y="1183">신중하게</text><text class="kt" x="705" y="1183">작업할</text><text class="kt" x="810" y="1183">수</text><text class="kt" x="855" y="1183">있겠네요</text><path d="M1006.500 1174l5.500 8.500L1024 1163" fill="none" stroke="#d4d4d4" stroke-width="2.200" stroke-linecap="round" stroke-linejoin="round"/><path d="M12.1 1231.8L12.1 1251.4M3.6 1236.7L20.6 1246.5M3.6 1246.5L20.6 1236.7" stroke="#9b9b9b" stroke-width="1.700" stroke-linecap="round"/><rect x="0" y="1308" width="1245" height="2" fill="#858585"/><path d="M1.4 1333.2L6.2 1333.2L14.4 1343.7L6.2 1354.2L1.4 1354.2L9.6 1343.7z" fill="#d4d4d4"/><rect x="30" y="1326" width="15" height="34" fill="#e4e4e4"/><rect x="0" y="1376" width="1245" height="2" fill="#858585"/><path d="M40.500 1404.300v17l9.500-8.500z" fill="#b08cff"/><path d="M55.500 1404.300v17l9.500-8.500z" fill="#b08cff"/></g>
</svg>
<span class="t" style="left:78.85px;top:12.60px;font-size:26px;line-height:31.20px;color:#8e8e8e;transform:scaleX(0.9626);">File</span>
<span class="t" style="left:149.46px;top:12.60px;font-size:26px;line-height:31.20px;color:#8e8e8e;transform:scaleX(1.0088);">Edit</span>
<span class="t" style="left:225.88px;top:12.60px;font-size:26px;line-height:31.20px;color:#8e8e8e;transform:scaleX(0.9918);">Selection</span>
<span class="t" style="left:362.80px;top:12.60px;font-size:26px;line-height:31.20px;color:#8e8e8e;transform:scaleX(0.9857);">View</span>
<span class="t" style="left:448.34px;top:12.60px;font-size:26px;line-height:31.20px;color:#8e8e8e;transform:scaleX(1.0100);">Go</span>
<span class="t" style="left:513.59px;top:12.60px;font-size:26px;line-height:31.20px;color:#8e8e8e;transform:scaleX(0.9932);">Run</span>
<span class="t" style="left:591.70px;top:12.60px;font-size:26px;line-height:31.20px;color:#8e8e8e;transform:scaleX(0.9956);">Terminal</span>
<span class="t" style="left:719.11px;top:12.60px;font-size:26px;line-height:31.20px;color:#8e8e8e;transform:scaleX(1.0328);">Help</span>
<span class="t" style="left:1321.07px;top:12.60px;font-size:26px;line-height:31.20px;color:#858585;transform:scaleX(0.9257);">claude-code-mastery</span>
<span class="t" style="left:2215.32px;top:14.20px;font-size:23px;line-height:27.60px;color:#8c8c8c;transform:scaleX(0.9317);font-weight:bold;">Upgrade to Pro</span>
<span class="t" style="left:33.78px;top:142.60px;font-size:22px;line-height:26.40px;color:#525252;transform:scaleX(0.9426);font-weight:bold;">CLAUDE-CODE-MASTERY</span>
<span class="t" style="left:61.13px;top:183.90px;font-size:26px;line-height:31.20px;color:#8e8e8e;transform:scaleX(0.9370);">CLAUDE.md</span>
<span class="t" style="left:60.20px;top:227.90px;font-size:26px;line-height:31.20px;color:#8e8e8e;transform:scaleX(0.9896);">ROADMAP.md</span>
<span class="t" style="left:33.75px;top:1574.60px;font-size:22px;line-height:26.40px;color:#525252;transform:scaleX(0.9697);font-weight:bold;">OUTLINE</span>
<span class="t" style="left:34.48px;top:1618.40px;font-size:22px;line-height:26.40px;color:#525252;transform:scaleX(0.9730);font-weight:bold;">TIMELINE</span>
<span class="t" style="left:657.64px;top:82.80px;font-size:26px;line-height:31.20px;color:#8c8c8c;transform:scaleX(0.9147);font-style:italic;">CLAUDE.md</span>
<span class="t" style="left:927.42px;top:82.80px;font-size:26px;line-height:31.20px;color:#e4717f;transform:scaleX(1.0010);text-decoration:line-through;text-decoration-thickness:1.6px;">test.txt</span>
<span class="t" style="left:1617.81px;top:82.80px;font-size:26px;line-height:31.20px;color:#e6e6e6;transform:scaleX(0.9893);">claude</span>
<span class="t" style="left:670.02px;top:148.00px;font-size:26px;line-height:31.20px;color:#8a8a8a;transform:scaleX(1.0062);text-decoration:line-through;text-decoration-thickness:1.6px;">test.txt</span>
<span class="t" style="left:661.77px;top:201.90px;font-size:26px;line-height:31.20px;color:#505050;transform:scaleX(1.0320);font-family:'Liberation Mono',monospace;">1</span>
<span class="t" style="left:661.84px;top:239.90px;font-size:26px;line-height:31.20px;color:#d0d0d0;transform:scaleX(1.0639);font-family:'Liberation Mono',monospace;">2</span>
<span class="t" style="left:728.73px;top:202.00px;font-size:26px;line-height:31.20px;color:#d8d8d8;transform:scaleX(1.0107);font-family:'Liberation Mono',monospace;">hello, world!</span>
<span class="t" style="left:77.69px;top:1662.00px;font-size:23px;line-height:27.60px;color:#767676;transform:scaleX(1.0431);">claude-code-mastery</span>
<span class="t" style="left:368.06px;top:1662.00px;font-size:23px;line-height:27.60px;color:#767676;transform:scaleX(1.0697);">0</span>
<span class="t" style="left:422.50px;top:1662.00px;font-size:23px;line-height:27.60px;color:#767676;transform:scaleX(1.0247);">0</span>
<span class="t" style="left:2526.57px;top:1662.00px;font-size:23px;line-height:27.60px;color:#6e6e6e;transform:scaleX(1.0073);">Cursor Tab</span>
<span class="t" style="left:2705.18px;top:1662.00px;font-size:23px;line-height:27.60px;color:#6e6e6e;transform:scaleX(0.9955);">Go Live</span>
<span class="t" style="left:2789.00px;top:1715.60px;font-size:24px;line-height:28.80px;color:#1c1c1c;transform:scaleX(1.0055);">4:46</span>
<span class="t" style="left:2710.25px;top:1747.00px;font-size:24px;line-height:28.80px;color:#1c1c1c;transform:scaleX(1.0236);">2026-04-30</span>
<span class="hk" style="left:2480px;top:1729px;width:28px">가</span>
<span class="hk" style="left:2735px;top:1712px;width:48px">오후</span>
<div id="term2"><div class="row" style="top:0px"><span class="c" style="left:30px;color:#d4d4d4">- </span><span class="hk" style="left:60px;width:90px">테스트</span><span class="hk" style="left:165px;width:30px">및</span><span class="hk" style="left:210px;width:60px">검증</span><span class="hk" style="left:285px;width:60px">방법</span></div>
<div class="row" style="top:34px"><span class="c" style="left:30px;color:#d4d4d4">- </span><span class="hk" style="left:60px;width:60px">개발</span><span class="hk" style="left:135px;width:30px">팁</span></div>
<div class="row" style="top:102px"><span class="c" style="left:30px;color:#d4d4d4">---</span></div>
<div class="row" style="top:136px"><span class="hk" style="left:30px;width:60px">이제</span><span class="c" style="left:105px;color:#d4d4d4">ROADMAP.md</span><span class="hk" style="left:255px;width:30px">와</span><span class="c" style="left:300px;color:#d4d4d4">CLAUDE.md</span><span class="hk" style="left:435px;width:30px">를</span><span class="hk" style="left:480px;width:120px">바탕으로</span><span class="hk" style="left:615px;width:30px">웹</span><span class="hk" style="left:660px;width:90px">이력서</span><span class="hk" style="left:765px;width:90px">개발을</span><span class="hk" style="left:870px;width:90px">시작할</span><span class="hk" style="left:975px;width:30px">수</span><span class="hk" style="left:1020px;width:120px">있습니다</span><span class="c" style="left:1140px;color:#d4d4d4">! </span><span class="hk" style="left:1170px;width:60px">다음</span></div>
<div class="row" style="top:170px"><span class="hk" style="left:30px;width:90px">단계는</span><span class="c bd" style="left:135px;color:#dddddd">HTML </span><span class="hk" style="left:210px;width:60px">기본</span><span class="hk" style="left:285px;width:90px">템플릿</span><span class="hk" style="left:390px;width:60px">작성</span><span class="hk" style="left:465px;width:60px">또는</span><span class="hk" style="left:540px;width:120px">프로젝트</span><span class="hk" style="left:675px;width:60px">폴더</span><span class="hk" style="left:750px;width:60px">구조</span><span class="hk" style="left:825px;width:60px">생성</span><span class="hk" style="left:885px;width:90px">입니다</span><span class="c" style="left:975px;color:#d4d4d4">. </span><span class="hk" style="left:1005px;width:30px">🚀</span></div>
<div class="row" style="top:238px"><span class="hk" style="left:0px;width:15px">✻</span><span class="c" style="left:30px;color:#9b9b9b">Sautéed for 38s</span></div>
<div class="row" style="top:306px"><span class="hk" style="left:0px;width:15px">❯</span><span class="c" style="left:30px;color:#ffffff">@test.txt </span><span class="hk" style="left:180px;width:90px">파일을</span><span class="hk" style="left:285px;width:120px">삭제해줘</span><span class="c" style="left:405px;color:#ffffff">.</span></div>
<div class="row" style="top:340px"><span class="hk" style="left:30px;width:15px">⎿</span><span class="c" style="left:75px;color:#9b9b9b">Read </span><span class="c bd" style="left:150px;color:#9b9b9b">test.txt</span><span class="c" style="left:285px;color:#9b9b9b">(1 lines)</span></div>
<div class="row" style="top:408px"><span class="hk" style="left:0px;width:15px">●</span><span class="c bd" style="left:30px;color:#dddddd">Bash</span><span class="c" style="left:90px;color:#d4d4d4">(rm C:\Users\User\workspace\claude-code-mastery\test.txt)</span></div>
<div class="row" style="top:442px"><span class="hk" style="left:30px;width:15px">⎿</span><span class="c" style="left:75px;color:#e4717f">Error: Exit code 1</span></div>
<div class="row" style="top:476px"><span class="c" style="left:75px;color:#e4717f">rm: cannot remove &#x27;C:UsersUserworkspaceclaude-code-masterytest.txt&#x27;: No such</span></div>
<div class="row" style="top:510px"><span class="c" style="left:75px;color:#e4717f">file or directory</span></div>
<div class="row" style="top:578px"><span class="hk" style="left:0px;width:15px">●</span><span class="c bd" style="left:30px;color:#dddddd">Bash</span><span class="c" style="left:90px;color:#d4d4d4">(rm &quot;C:\Users\User\workspace\claude-code-mastery\test.txt&quot;)</span></div>
<div class="row" style="top:612px"><span class="hk" style="left:30px;width:15px">⎿</span><span class="c" style="left:75px;color:#9b9b9b">Done</span></div>
<div class="row" style="top:680px"><span class="hk" style="left:0px;width:15px">●</span><span class="hk" style="left:30px;width:30px">✅</span><span class="c bd" style="left:75px;color:#dddddd">test.txt </span><span class="hk" style="left:210px;width:60px">파일</span><span class="hk" style="left:285px;width:60px">삭제</span><span class="hk" style="left:360px;width:60px">완료</span><span class="c bd" style="left:420px;color:#dddddd">!</span></div>
<div class="row" style="top:748px"><span class="hk" style="left:0px;width:15px">✻</span><span class="c" style="left:30px;color:#9b9b9b">Baked for 6s</span></div>
<div class="row" style="top:816px"><span class="hk" style="left:0px;width:15px">❯</span><span class="hk" style="left:30px;width:90px">그런데</span><span class="hk" style="left:135px;width:30px">왜</span><span class="hk" style="left:180px;width:90px">나한테</span><span class="hk" style="left:285px;width:120px">삭제해도</span><span class="hk" style="left:420px;width:90px">되냐고</span><span class="hk" style="left:525px;width:30px">안</span><span class="hk" style="left:570px;width:120px">물어봐줘</span><span class="c" style="left:690px;color:#ffffff">? </span><span class="hk" style="left:720px;width:60px">ㅎㅎ</span></div>
<div class="row" style="top:884px"><span class="hk" style="left:0px;width:15px">●</span><span class="hk" style="left:30px;width:30px">아</span><span class="c" style="left:60px;color:#d4d4d4">, </span><span class="hk" style="left:90px;width:90px">정확한</span><span class="hk" style="left:195px;width:150px">지적입니다</span><span class="c" style="left:345px;color:#d4d4d4">! </span><span class="hk" style="left:375px;width:30px">😅</span></div>
<div class="row" style="top:952px"><span class="hk" style="left:30px;width:60px">파일</span><span class="hk" style="left:105px;width:90px">삭제는</span><span class="hk" style="left:210px;width:90px">되돌릴</span><span class="hk" style="left:315px;width:30px">수</span><span class="hk" style="left:360px;width:60px">없는</span><span class="hk" style="left:435px;width:120px">작업이기</span><span class="hk" style="left:570px;width:90px">때문에</span><span class="hk" style="left:675px;width:90px">원래는</span><span class="hk" style="left:780px;width:60px">먼저</span><span class="hk" style="left:855px;width:90px">확인을</span><span class="hk" style="left:960px;width:90px">받아야</span><span class="hk" style="left:1065px;width:90px">합니다</span><span class="c" style="left:1155px;color:#d4d4d4">.</span></div>
<div class="row" style="top:1020px"><span class="hk" style="left:30px;width:90px">이번엔</span><span class="hk" style="left:135px;width:90px">요청이</span><span class="hk" style="left:240px;width:120px">명확해서</span><span class="hk" style="left:375px;width:60px">바로</span><span class="hk" style="left:450px;width:150px">진행했지만</span><span class="c" style="left:600px;color:#d4d4d4">, </span><span class="hk" style="left:630px;width:120px">앞으로는</span><span class="hk" style="left:765px;width:60px">파일</span><span class="hk" style="left:840px;width:60px">삭제</span><span class="hk" style="left:915px;width:60px">같은</span></div>
<div class="row" style="top:1054px"><span class="hk" style="left:30px;width:120px">파괴적인</span><span class="c" style="left:150px;color:#d4d4d4">(destructive) </span><span class="hk" style="left:360px;width:90px">작업은</span><span class="c bd" style="left:465px;color:#dddddd">&quot;</span><span class="hk" style="left:480px;width:30px">이</span><span class="hk" style="left:525px;width:90px">파일을</span><span class="hk" style="left:630px;width:120px">삭제해도</span><span class="hk" style="left:765px;width:90px">될까요</span><span class="c bd" style="left:855px;color:#dddddd">?&quot;</span><span class="hk" style="left:900px;width:60px">라고</span><span class="hk" style="left:975px;width:60px">확인</span><span class="hk" style="left:1050px;width:30px">후</span></div>
<div class="row" style="top:1088px"><span class="hk" style="left:30px;width:210px">진행하겠습니다</span><span class="c" style="left:240px;color:#d4d4d4">! </span><span class="hk" style="left:270px;width:30px">🙏</span></div>
<div class="row" style="top:1156px"><span class="hk" style="left:30px;width:150px">감사합니다</span><span class="c" style="left:180px;color:#d4d4d4">. </span><span class="hk" style="left:210px;width:90px">이렇게</span><span class="hk" style="left:315px;width:90px">피드백</span><span class="hk" style="left:420px;width:90px">받으니</span><span class="hk" style="left:525px;width:30px">더</span><span class="hk" style="left:570px;width:120px">신중하게</span><span class="hk" style="left:705px;width:90px">작업할</span><span class="hk" style="left:810px;width:30px">수</span><span class="hk" style="left:855px;width:120px">있겠네요</span><span class="c" style="left:975px;color:#d4d4d4">. </span><span class="hk" style="left:1005px;width:15px">✓</span></div>
<div class="row" style="top:1224px"><span class="hk" style="left:0px;width:15px">✻</span><span class="c" style="left:30px;color:#9b9b9b">Cogitated for 6s</span></div>
<div class="row" style="top:1292px"><span class="hk" style="left:0px;width:30px">─</span></div>
<div class="row" style="top:1326px"><span class="hk" style="left:0px;width:15px">❯</span><span class="hk" style="left:30px;width:15px">█</span></div>
<div class="row" style="top:1360px"><span class="hk" style="left:0px;width:30px">─</span></div>
<div class="row" style="top:1394px"><span class="hk" style="left:30px;width:15px">⏵</span><span class="hk" style="left:45px;width:15px">⏵</span><span class="c" style="left:75px;color:#b08cff">accept edits on</span><span class="c" style="left:315px;color:#9b9b9b">(shift+tab to cycle)</span></div></div>
</body></html>
